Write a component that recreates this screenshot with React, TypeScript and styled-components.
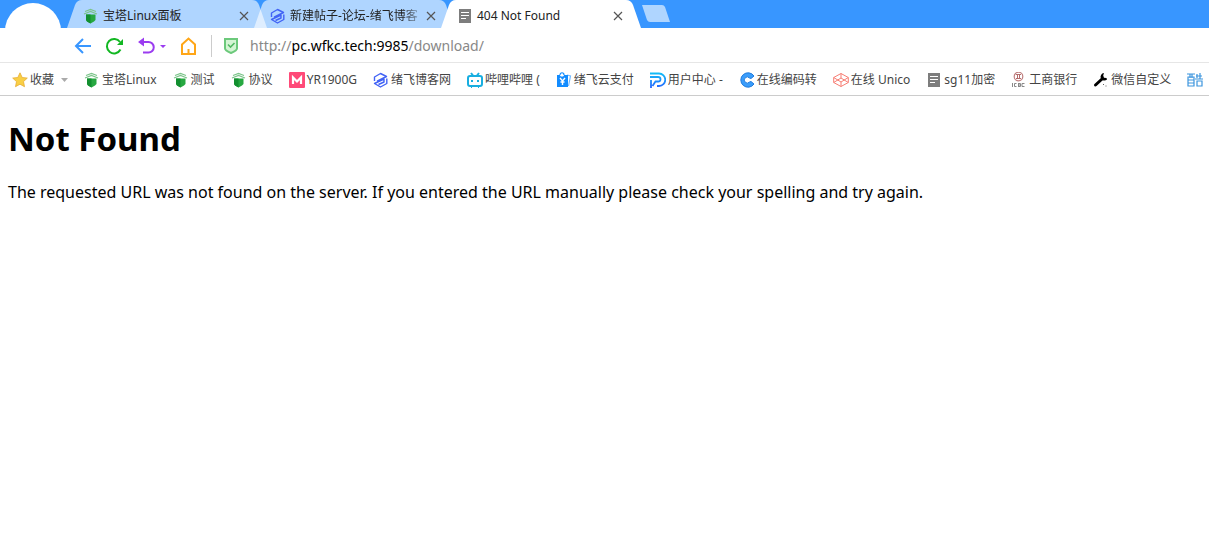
import React, { useState } from 'react';
import styled, { createGlobalStyle } from 'styled-components';

const GlobalStyle = createGlobalStyle`
  * { box-sizing: border-box; }
  body {
    margin: 0;
    background: #fff;
    font-family: "Noto Sans", "Noto Sans CJK SC", sans-serif;
    overflow-x: hidden;
  }
  button { font: inherit; border: 0; background: none; padding: 0; cursor: pointer; }
`;

const Browser = styled.div`
  position: relative;
  display: flex;
  flex-direction: column;
  min-height: 100vh;
`;

const TabStrip = styled.div`
  display: flex;
  height: 28px;
  padding-left: 67px;
  background: #3896ff;
`;

const Avatar = styled.button`
  position: absolute;
  left: 5px;
  top: 3px;
  width: 56px;
  height: 56px;
  border-radius: 50%;
  background: #fff;
`;

const TabShell = styled.div<{ $active?: boolean }>`
  display: flex;
  align-items: center;
  flex: none;
  width: 200px;
  height: 28px;
  margin-right: -13px;
  padding: 4px 15px 0 16px;
  background: ${p => (p.$active ? '#fff' : 'rgba(255, 255, 255, 0.6)')};
  clip-path: path('M0 28 L8 5 Q10 0 15 0 L185 0 Q190 0 192 5 L200 28 Z');
`;

const TabButton = styled.button<{ $fade?: boolean }>`
  display: flex;
  align-items: center;
  gap: 4px;
  flex: 1;
  min-width: 0;
  overflow: hidden;
  white-space: nowrap;
  font-size: 12px;
  line-height: 20px;
  color: #222;
  mask-image: ${p => (p.$fade ? 'linear-gradient(to right, #000 132px, transparent 156px)' : 'none')};
  svg { flex: none; }
`;

const CloseButton = styled.button`
  display: flex;
  flex: none;
  width: 16px;
  height: 16px;
  color: #555;
`;

const NewTab = styled.button`
  flex: none;
  width: 28px;
  height: 17px;
  margin: 5px 0 0 14px;
  background: #afd5ff;
  clip-path: path('M0 0 L20 0 Q22 0 23 2 L28 17 L8 17 Q6 17 5 15 Z');
`;

const Toolbar = styled.div`
  display: flex;
  align-items: center;
  height: 35px;
  padding: 1px 0 0 74px;
  border-bottom: 1px solid #e6e6e6;
`;

const NavButton = styled.button<{ $gap: number }>`
  display: flex;
  align-items: center;
  flex: none;
  margin-right: ${p => p.$gap}px;
`;

const Divider = styled.span`
  width: 1px;
  height: 22px;
  margin-right: 12px;
  background: #ccc;
`;

const Address = styled.button`
  flex: 1;
  text-align: left;
  font-size: 14px;
  line-height: 24px;
  color: #888;
  cursor: text;
`;

const AddressInput = styled.input`
  flex: 1;
  border: 0;
  outline: 0;
  padding: 0;
  font: inherit;
  font-size: 14px;
  line-height: 24px;
`;

const Host = styled.span`
  color: #000;
`;

const Bookmarks = styled.nav`
  display: flex;
  align-items: center;
  gap: 16px;
  height: 33px;
  padding: 2px 0 0 12px;
  overflow: hidden;
  border-bottom: 1px solid #ccc;
`;

const Bookmark = styled.a`
  display: flex;
  align-items: center;
  flex: none;
  gap: 2px;
  font-size: 12px;
  line-height: 20px;
  color: #444;
  text-decoration: none;
  white-space: nowrap;
`;

const Favorites = styled(Bookmark).attrs({ as: 'button' })``;

const Page = styled.main`
  padding: 21px 8px;
  color: #000;
`;

const Title = styled.h1`
  margin: 0 0 21px;
  font-size: 33px;
  line-height: 43px;
  font-weight: 700;
`;

const Message = styled.p`
  margin: 0;
  font-size: 16px;
  line-height: 22px;
`;

const Svg = ({ w = 16, h = 16, children }: { w?: number; h?: number; children: React.ReactNode }) => (
  <svg width={w} height={h} viewBox={`0 0 ${w} ${h}`} fill="none" aria-hidden="true">{children}</svg>
);

const Pagoda = () => (
  <Svg>
    <path d="M2 3.500 7.500 1.500 13 3.500M1 6 7.500 3.500 14 6" stroke="#7cc48a" strokeWidth="1.200" />
    <path d="M3 6.500h9.500V12l-1.500 1.500-3.500 2L4 13.500 3 12z" fill="#27a841" />
    <path d="M3 6.500h4.500v9L4 13.500 3 12z" fill="#138f30" />
  </Svg>
);

const HexLogo = () => (
  <Svg>
    <path d="M1.500 9V5L7.500 1.500 13.500 4.500 4 9.200M13.800 6.500v5L7.500 15 1.500 11.500 11 7v3L5.500 12.500" stroke="#4263f5" strokeWidth="1.400" strokeLinejoin="round" />
  </Svg>
);

const Doc = () => (
  <Svg>
    <path d="M2 1h12v14H2z" fill="#7d7d7d" />
    <path d="M4 4.500h8M4 7.500h8M4 10.500h5" stroke="#fff" strokeWidth="1.200" />
  </Svg>
);

const MLogo = () => (
  <Svg>
    <rect width="16" height="16" rx="1" fill="#ff4a78" />
    <path d="M4 12V5.500l4 4 4-4V12" stroke="#fff" strokeWidth="2.200" />
  </Svg>
);

const TvLogo = () => (
  <Svg>
    <rect x="1" y="4" width="14" height="10" rx="2" stroke="#18aee0" strokeWidth="2" />
    <path d="m4 1 2 2.500M12 1l-2 2.500M5 8v2M11 8v2M4 15h1M11 15h1" stroke="#18aee0" strokeWidth="2" />
  </Svg>
);

const PayLogo = () => (
  <Svg>
    <path d="m11 3 3.500 1-2 10" stroke="#74b9ff" strokeWidth="1.200" />
    <path d="M1 3h3c0 2 4 2 4 0h4v12H1z" fill="#128cff" />
    <path d="M4 3c0-3 4-3 4 0" stroke="#128cff" strokeWidth="1.200" />
    <path d="m4 6 2.500 3L9 6M6.500 9v4M4.500 10h4" stroke="#fff" strokeWidth="1.400" />
  </Svg>
);

const UserCenterLogo = () => (
  <Svg>
    <defs>
      <linearGradient id="uc" gradientUnits="userSpaceOnUse" x1="0" y1="0" x2="0" y2="16"><stop stopColor="#11c3f5" /><stop offset="1" stopColor="#2563ff" /></linearGradient>
    </defs>
    <path d="M0 1.500h9a6 6 0 0 1 0 12.500H7M0 5h8q2.500 0 2.500 2.300T8 9.500H5.500L2.500 14M1 8v8" stroke="url(#uc)" strokeWidth="1.800" />
  </Svg>
);

const CLogo = () => (
  <Svg>
    <path d="M15 12A7.200 7.200 0 1 1 15 4L12 6.500 10.500 6a3 3 0 1 0 0 4l1.500-.500z" fill="#3a9dfb" stroke="#217bdc" strokeWidth="1" />
  </Svg>
);

const Codepen = () => (
  <Svg>
    <path d="M8 1.500 15.300 5.500v5L8 14.500 .700 10.500v-5zM.700 5.500 8 10l7.300-4.500M.700 10.500 8 6l7.300 4.500M8 1.500V6M8 10v4.500" stroke="#f77c72" strokeWidth="1" />
  </Svg>
);

const Bank = () => (
  <Svg>
    <circle cx="7.500" cy="4.500" r="4.300" stroke="#c08080" strokeWidth="1.200" />
    <path d="M5 2.500h5M5 6.500h5M6.500 2.500v4M8.500 2.500v4" stroke="#b46c6c" />
    <path d="M1.500 11v4M5.500 11.500H3.500v3h2M7.500 11v4M7.500 11.500h2v3h-2M9 13H7.500M13.500 11.500h-2.500v3h2.500" stroke="#888" strokeWidth="1" />
  </Svg>
);

const Wrench = () => (
  <Svg>
    <path d="M2.500 13 9 7" stroke="#000" strokeWidth="3" strokeLinecap="round" />
    <path d="M11 1a3.800 3.800 0 1 0 3 6.500l-.500-1.500-2.500-.300-.800-2.200z" fill="#000" />
    <path d="M10 12.500h1M12.500 14h1" stroke="#666" />
  </Svg>
);

const Cool = () => (
  <Svg>
    <path d="M0 2h8M3 2v4M5 2v4M1 5h6v9H1zM1 8h6M1 11h6M10 2v4M13 1v6M9 4h6M8 7h8M10 9h5v5h-5z" stroke="#3c95de" strokeWidth="1.200" />
  </Svg>
);

const Star = () => (
  <Svg>
    <path d="m8 .800 2.200 4.700 5.100.600-3.800 3.500 1 5.100L8 12.200l-4.500 2.500 1-5.100L.700 6.100l5.100-.600z" fill="#f9cf45" stroke="#e6ac35" strokeWidth=".8" />
  </Svg>
);

const Close = () => (
  <Svg><path d="m4 4 8 8M12 4l-8 8" stroke="currentColor" strokeWidth="1.200" /></Svg>
);

const tabs = [
  { title: '宝塔Linux面板', Icon: Pagoda },
  { title: '新建帖子-论坛-绪飞博客', Icon: HexLogo, fade: true },
  { title: '404 Not Found', Icon: Doc, active: true },
];

const bookmarks = [
  { label: '宝塔Linux', Icon: Pagoda },
  { label: '测试', Icon: Pagoda },
  { label: '协议', Icon: Pagoda },
  { label: 'YR1900G', Icon: MLogo },
  { label: '绪飞博客网', Icon: HexLogo },
  { label: '哔哩哔哩 (', Icon: TvLogo },
  { label: '绪飞云支付', Icon: PayLogo },
  { label: '用户中心 -', Icon: UserCenterLogo },
  { label: '在线编码转', Icon: CLogo },
  { label: '在线 Unico', Icon: Codepen },
  { label: 'sg11加密', Icon: Doc },
  { label: '工商银行', Icon: Bank },
  { label: '微信自定义', Icon: Wrench },
  { label: '', Icon: Cool },
];

export default function App() {
  const [editing, setEditing] = useState(false);
  const [path, setPath] = useState('http://pc.wfkc.tech:9985/download/');
  const [, scheme, host, rest] = path.match(/^(\w+:\/\/)?([^/]*)(.*)$/) ?? ['', '', path, ''];

  return (
    <Browser>
      <GlobalStyle />
      <TabStrip>
        {tabs.map(({ title, Icon, active, fade }) => (
          <TabShell key={title} $active={active}>
            <TabButton $fade={fade}><Icon />{title}</TabButton>
            <CloseButton aria-label="关闭标签页"><Close /></CloseButton>
          </TabShell>
        ))}
        <NewTab aria-label="新建标签页" />
      </TabStrip>
      <Avatar aria-label="用户" />
      <Toolbar>
        <NavButton $gap={13} aria-label="后退">
          <Svg w={18} h={18}><path d="M9 2 2 9l7 7M2 9h15" stroke="#3896ff" strokeWidth="2" /></Svg>
        </NavButton>
        <NavButton $gap={14} aria-label="刷新">
          <Svg w={19} h={18}><path d="M15.500 12.500A7.200 7.200 0 1 1 15 5" stroke="#12b722" strokeWidth="2" /><path d="M18 2v6h-6z" fill="#12b722" /></Svg>
        </NavButton>
        <NavButton $gap={13} aria-label="撤销">
          <Svg w={29} h={18}><path d="M3 5h7.500a5 5 0 0 1 0 10.500H5" stroke="#9b3cf0" strokeWidth="2" /><path d="M0 5 6 .500v9zM22 8h6l-3 3z" fill="#9b3cf0" /></Svg>
        </NavButton>
        <NavButton $gap={14} aria-label="主页">
          <Svg w={17} h={18}><path d="M2 7.500 8.500 1.500 15 7.500V17H2zM8.500 12v5" stroke="#ffa617" strokeWidth="2" /></Svg>
        </NavButton>
        <Divider />
        <NavButton $gap={12} aria-label="网站信息">
          <Svg w={14} h={16}><path d="M1 1h12v9.500q0 2-6 4.500-6-2.500-6-4.500z" fill="#d4f5d4" stroke="#6cc97b" strokeWidth="2" /><path d="m4 6.500 2.500 2.500L10.500 5" stroke="#52b963" strokeWidth="1.600" /></Svg>
        </NavButton>
        {editing ? (
          <AddressInput autoFocus aria-label="网址" value={path} onChange={e => setPath(e.target.value)} onBlur={() => setEditing(false)} />
        ) : (
          <Address onClick={() => setEditing(true)}>{scheme}<Host>{host}</Host>{rest}</Address>
        )}
      </Toolbar>
      <Bookmarks>
        <Favorites>
          <Star />收藏
          <Svg w={12} h={16}><path d="M5 6h7L8.500 10z" fill="#aaa" /></Svg>
        </Favorites>
        {bookmarks.map(({ label, Icon }, i) => (
          <Bookmark key={i} href="#" aria-label={label || '书签'}><Icon />{label}</Bookmark>
        ))}
      </Bookmarks>
      <Page>
        <Title>Not Found</Title>
        <Message>The requested URL was not found on the server. If you entered the URL manually please check your spelling and try again.</Message>
      </Page>
    </Browser>
  );
}
